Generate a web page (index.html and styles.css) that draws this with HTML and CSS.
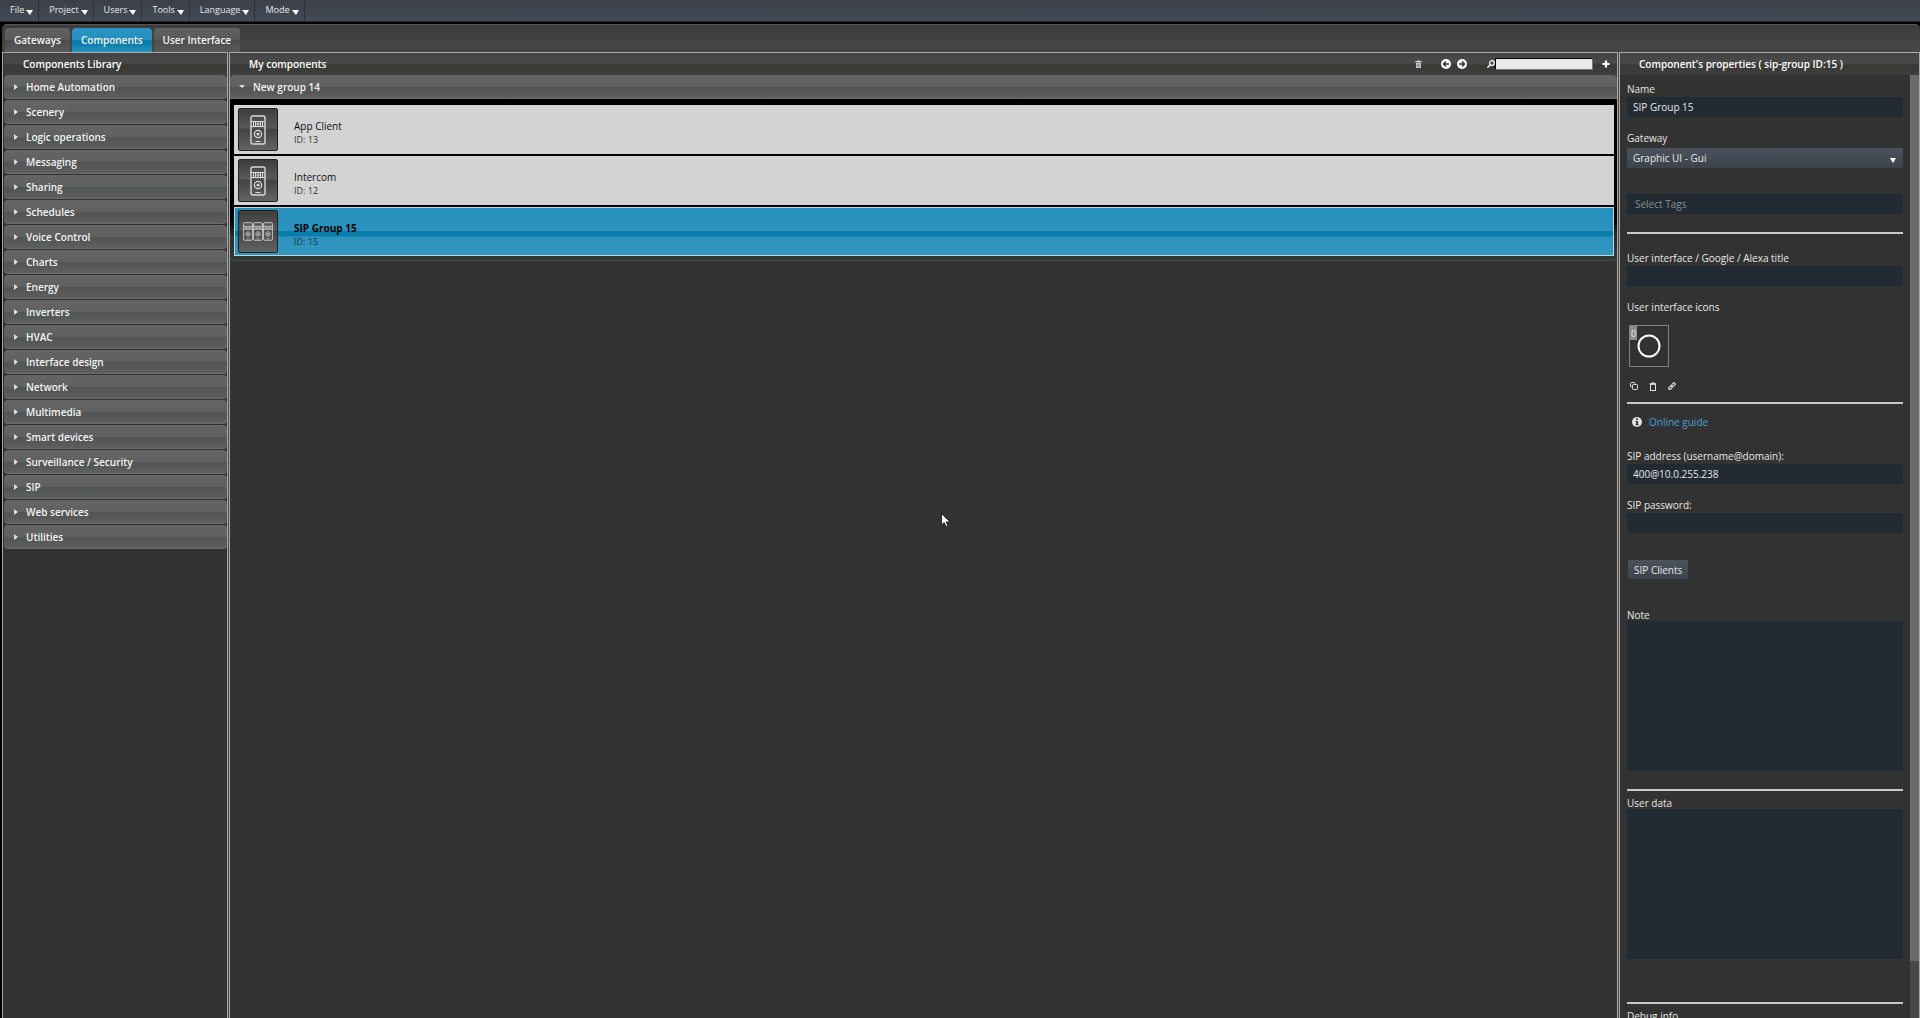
FILE: index.html
```html
<!DOCTYPE html>
<html lang="en">
<head>
<meta charset="utf-8">
<title>Configurator</title>
<link rel="stylesheet" href="styles.css">
</head>
<body>
<svg class="defs" aria-hidden="true">
  <symbol id="intercom" viewBox="0 0 16 30">
    <g fill="none" stroke="#d8d8d8">
      <rect x="1" y="1" width="14" height="28" rx="1.5" stroke-width="1.4"/>
      <path d="M1 6.500H15M1 11.500H15M3.500 6.500V11.500M5.500 6.500V11.500M10.500 6.500V11.500M12.500 6.500V11.500" />
      <circle cx="8" cy="9" r="1.200"/>
      <circle cx="8" cy="19" r="3.600" stroke-width="1.300"/>
      <path d="M5.500 26.500H10.500"/>
    </g>
    <circle cx="8" cy="19" r="1.500" fill="#d8d8d8"/>
  </symbol>
</svg>

<nav class="menubar">
  <button class="menu">File</button>
  <button class="menu">Project</button>
  <button class="menu">Users</button>
  <button class="menu">Tools</button>
  <button class="menu">Language</button>
  <button class="menu">Mode</button>
</nav>

<div class="workspace">
  <div class="tabs" role="tablist">
    <button class="tab" role="tab">Gateways</button>
    <button class="tab active" role="tab" aria-selected="true">Components</button>
    <button class="tab" role="tab">User Interface</button>
  </div>

  <div class="panels">
    <aside class="panel library">
      <h2 class="panel-title">Components Library</h2>
      <button class="fold">Home Automation</button>
      <button class="fold">Scenery</button>
      <button class="fold">Logic operations</button>
      <button class="fold">Messaging</button>
      <button class="fold">Sharing</button>
      <button class="fold">Schedules</button>
      <button class="fold">Voice Control</button>
      <button class="fold">Charts</button>
      <button class="fold">Energy</button>
      <button class="fold">Inverters</button>
      <button class="fold">HVAC</button>
      <button class="fold">Interface design</button>
      <button class="fold">Network</button>
      <button class="fold">Multimedia</button>
      <button class="fold">Smart devices</button>
      <button class="fold">Surveillance / Security</button>
      <button class="fold">SIP</button>
      <button class="fold">Web services</button>
      <button class="fold">Utilities</button>
    </aside>

    <main class="panel components">
      <header class="panel-title">
        <h2 class="title-text">My components</h2>
        <div class="tools">
          <button class="tool delete" aria-label="Delete">
            <svg width="7" height="8" viewBox="0 0 8 10"><path d="M0 1.500H2.500V.5H5.500V1.500H8V2.800H0Z" fill="#ddd"/><path d="M1 3.500H7V10H1Z" fill="#ddd"/><path d="M2.500 4.500V9M4 4.500V9M5.500 4.500V9" stroke="#555" stroke-width=".7"/></svg>
          </button>
          <button class="tool" aria-label="Previous">
            <svg width="10" height="10" viewBox="0 0 10 10"><circle cx="5" cy="5" r="5" fill="#fff"/><path d="M8 5H3M5 2.500L2.500 5L5 7.500" fill="none" stroke="#333" stroke-width="1.500"/></svg>
          </button>
          <button class="tool next" aria-label="Next">
            <svg width="10" height="10" viewBox="0 0 10 10"><circle cx="5" cy="5" r="5" fill="#fff"/><path d="M2 5H7M5 2.500L7.500 5L5 7.500" fill="none" stroke="#333" stroke-width="1.500"/></svg>
          </button>
          <label class="search">
            <svg width="8" height="8" viewBox="0 0 8 8"><circle cx="5" cy="3" r="2.300" fill="none" stroke="#fff" stroke-width="1.200"/><path d="M3.300 4.700L.4 7.600" stroke="#fff" stroke-width="1.500"/></svg>
            <input class="search-box" type="text" aria-label="Search">
          </label>
          <button class="tool" aria-label="Add">
            <svg width="8" height="8" viewBox="0 0 8 8"><path d="M4 .5V7.500M.5 4H7.500" stroke="#fff" stroke-width="2.200"/></svg>
          </button>
        </div>
      </header>
      <button class="fold open">New group 14</button>
      <ul class="items">
        <li class="item">
          <span class="thumb"><svg width="16" height="30"><use href="#intercom"/></svg></span>
          <span class="item-text"><span class="item-name">App Client</span><span class="item-id">ID: 13</span></span>
        </li>
        <li class="item">
          <span class="thumb"><svg width="16" height="30"><use href="#intercom"/></svg></span>
          <span class="item-text"><span class="item-name">Intercom</span><span class="item-id">ID: 12</span></span>
        </li>
        <li class="item selected">
          <span class="thumb trio"><svg width="10" height="19"><use href="#intercom"/></svg><svg width="10" height="19"><use href="#intercom"/></svg><svg width="10" height="19"><use href="#intercom"/></svg></span>
          <span class="item-text"><span class="item-name">SIP Group 15</span><span class="item-id">ID: 15</span></span>
        </li>
      </ul>
    </main>

    <aside class="panel properties">
      <h2 class="panel-title">Component's properties ( sip-group ID:15 )</h2>
      <div class="scroller">
        <form class="form">
          <label class="label" for="name">Name</label>
          <input class="field" id="name" type="text" value="SIP Group 15">
          <label class="label" for="gateway">Gateway</label>
          <span class="select-wrap"><select class="select" id="gateway"><option>Graphic UI - Gui</option></select></span>
          <input class="field tags" type="text" placeholder="Select Tags" aria-label="Select Tags">
          <hr class="rule">
          <label class="label" for="title">User interface / Google / Alexa title</label>
          <input class="field" id="title" type="text">
          <span class="label">User interface icons</span>
          <button type="button" class="icon-slot" aria-label="Icon 0">
            <span class="slot-number">0</span>
            <svg width="24" height="24" viewBox="0 0 24 24"><circle cx="12" cy="12" r="10.500" fill="none" stroke="#fff" stroke-width="2"/></svg>
          </button>
          <div class="icon-actions">
            <button type="button" class="tool" aria-label="Copy"><svg width="8" height="8" viewBox="0 0 8 8"><g fill="none" stroke="#ddd"><rect x="2.500" y="2.500" width="5" height="5" rx=".8"/><path d="M2.500 5H1.200L.5 4.300V1.200L1.200.5H4.300L5 1.200V2.500"/></g></svg></button>
            <button type="button" class="tool" aria-label="Paste"><svg width="8" height="9" viewBox="0 0 8 9"><rect x="1.500" y="2" width="5" height="6.500" fill="none" stroke="#ddd"/><path d="M.8 2H7.200M2.800 .8H5.200" stroke="#ddd" stroke-width="1.300"/></svg></button>
            <button type="button" class="tool" aria-label="Link"><svg width="8" height="8" viewBox="0 0 8 8"><g fill="none" stroke="#ddd" stroke-width="1.200"><rect x="-1.900" y="-1.200" width="3.800" height="2.400" rx="1.200" transform="translate(2.300 5.700) rotate(-45)"/><rect x="-1.900" y="-1.200" width="3.800" height="2.400" rx="1.200" transform="translate(5.500 2.500) rotate(-45)"/></g></svg></button>
          </div>
          <hr class="rule">
          <div class="guide">
            <svg width="10" height="10" viewBox="0 0 10 10"><circle cx="5" cy="5" r="5" fill="#e4e4e4"/><path d="M4 1.500H6V3H4ZM3.500 4H6V7.200H6.700V8.300H3.500V7.200H4.200V5H3.500Z" fill="#333"/></svg>
            <a class="guide-link" href="#">Online guide</a>
          </div>
          <label class="label" for="sip">SIP address (username@domain):</label>
          <input class="field" id="sip" type="text" value="400@10.0.255.238">
          <label class="label" for="pwd">SIP password:</label>
          <input class="field" id="pwd" type="password">
          <button type="button" class="clients">SIP Clients</button>
          <label class="label tight" for="note">Note</label>
          <textarea class="field area" id="note"></textarea>
          <hr class="rule">
          <label class="label tight data" for="data">User data</label>
          <textarea class="field area" id="data"></textarea>
          <hr class="rule last">
          <span class="label tight data">Debug info</span>
        </form>
        <div class="scrollbar"><div class="scroll-thumb"></div></div>
      </div>
    </aside>
  </div>
</div>

<svg class="pointer" width="10" height="15" viewBox="0 0 10 15" aria-hidden="true"><path d="M.5 .8V12L3.200 9.500L5 13.800L7 13L5.200 8.900H9.200Z" fill="#fff" stroke="#111" stroke-width=".8"/></svg>
</body>
</html>
```
FILE: styles.css
```css
*, *::before, *::after { box-sizing: border-box; }

body {
  margin: 0;
  height: 100vh;
  display: flex;
  flex-direction: column;
  overflow: hidden;
  background: #000;
  color: #e8e8e8;
  font: 10px/16px "Open Sans", "Noto Sans", sans-serif;
}

button, input, select, textarea { font: inherit; color: inherit; border: 0; margin: 0; padding: 0; }
button { background: none; text-align: left; white-space: nowrap; }
h2 { margin: 0; font: inherit; }
svg { display: block; flex: none; }
.defs { position: absolute; width: 0; height: 0; }

/* Menu bar */
.menubar {
  flex: none;
  display: flex;
  height: 22px;
  background: linear-gradient(#3a3f48, #454b55);
  border-bottom: 1px solid #23272d;
}
.menu {
  display: flex;
  align-items: center;
  gap: 2px;
  padding: 0 5px 1px 10px;
  border-right: 1px solid #2c3037;
  font-size: 9px;
}
.menu::after {
  content: "";
  margin-top: 4px;
  border: 4px solid transparent;
  border-top: 5px solid #fff;
  border-bottom: 0;
  border-right-width: 3px;
}

/* Workspace and tabs */
.workspace {
  flex: 1;
  min-height: 0;
  display: flex;
  flex-direction: column;
  margin: 2px 0 0 2px;
  background: linear-gradient(#3c3c3c, #474745 28px);
  border-top: 1px solid #555;
  border-radius: 5px 5px 0 0;
}
.tabs { flex: none; display: flex; gap: 2px; padding: 3px 3px 0; height: 27px; }
.tab {
  padding: 0 9px;
  border-radius: 4px 4px 0 0;
  background: linear-gradient(#636363, #585858 50%, #4b4d4d 52%, #5a5a5a);
  color: #f4f4f4;
  font-weight: 600;
}
.tab.active { background: linear-gradient(#2a95c2, #2590bd 48%, #0b7cab 52%, #0b7cab 66%, #2a93bf); }

/* Panels */
.panels { flex: 1; min-height: 0; display: grid; grid-template-columns: 226px minmax(0, 1fr) 301px; gap: 1px; }
.panel {
  min-width: 0;
  min-height: 0;
  overflow: hidden;
  display: flex;
  flex-direction: column;
  border: 1px solid #a9a9a9;
  border-bottom: 0;
  background: #323232;
}
.library { padding-left: 1px; }
.panel-title {
  flex: none;
  display: flex;
  align-items: center;
  height: 22px;
  padding: 0 7px 0 19px;
  background: linear-gradient(#434443, #4a4b49 45%, #393a38 55%, #3e3e3c);
  color: #fff;
  font-weight: 600;
}
.title-text { flex: 1; }

.fold {
  flex: none;
  display: flex;
  align-items: center;
  gap: 8px;
  height: 24px;
  margin: 0 0 1px;
  padding: 0 0 0 10px;
  border-radius: 4px;
  border-bottom: 1px solid #6b6b6b;
  background: linear-gradient(#656565, #606060 50%, #505453 55%, #5f5f5f);
  color: #f4f4f4;
  font-weight: 600;
}
.fold::before {
  content: "";
  border: 3px solid transparent;
  border-left: 4px solid #ddd;
  border-right: 0;
}
.fold.open { margin: 0; border-radius: 4px 4px 0 0; padding-left: 9px; }
.fold.open::before { border: 3px solid transparent; border-top: 3px solid #ddd; border-bottom: 0; }

/* Component list */
.tools { display: flex; align-items: center; }
.tool { display: block; }
.delete { margin-right: 19px; }
.next { margin: 0 20px 0 6px; }
.search { display: flex; align-items: center; margin-right: 9px; }
.search-box {
  width: 98px;
  height: 12px;
  border: 1px solid #777;
  border-top: 1px solid #000;
  border-left: 1px solid #000;
  background: #e8e8e8;
  color: #222;
}
.items {
  list-style: none;
  display: flex;
  flex-direction: column;
  gap: 2px;
  margin: 0;
  padding: 6px 3px 4px 4px;
  background: linear-gradient(#000 75%, #2b2d2d 85%, #333636);
  border-bottom: 1px solid #4b4d4d;
  border-radius: 0 0 5px 5px;
}
.item {
  display: flex;
  align-items: center;
  gap: 16px;
  height: 49px;
  padding: 0 4px;
  background: #d2d3d2;
  color: #111;
}
.item.selected {
  background: linear-gradient(#2590bd, #2b93bd 48%, #087cab 50%, #087cab 59%, #2e93bd 61%, #3397c0);
  outline: 1px solid #b9d5e0;
  outline-offset: -1px;
}
.thumb {
  display: flex;
  align-items: center;
  justify-content: center;
  width: 40px;
  height: 43px;
  border: 1px solid #222;
  border-radius: 2px;
  background: linear-gradient(#3c3d3d, #585959 46%, #434545 50%, #626363);
}
.item-text { display: flex; flex-direction: column; line-height: 13px; padding-top: 6px; }
.item-id { font-size: 9px; color: #333; }
.selected .item-name { font-weight: 700; color: #000; }
.selected .item-id { color: #14364a; }

/* Properties */
.scroller { flex: 1; min-height: 0; display: flex; background: #323232; }
.form { flex: 1; min-width: 0; display: flex; flex-direction: column; padding: 6px 7px 0 7px; overflow: hidden; }
.form > * { flex: none; }
.label { height: 16px; }
.tight { height: 14px; }
.field {
  width: 100%;
  height: 20px;
  margin-bottom: 13px;
  padding: 0 6px;
  border-radius: 2px;
  background: #222a32;
  resize: none;
}
.tags { margin: 26px 0 18px; padding: 0 8px; }
.tags::placeholder { color: #8a8d90; opacity: 1; }
.select-wrap { display: block; position: relative; margin-top: 2px; }
.select-wrap::after {
  content: "";
  position: absolute;
  right: 7px;
  top: 10px;
  border: 3px solid transparent;
  border-top: 5px solid #fff;
  border-bottom: 0;
}
.select {
  appearance: none;
  display: block;
  width: 100%;
  height: 20px;
  padding: 0 6px;
  background: linear-gradient(#4b525d, #3d434c);
}
.rule { width: 100%; height: 2px; margin: 0 0 16px; border: 0; background: #c9c9c9; }
.icon-slot {
  position: relative;
  display: flex;
  align-items: center;
  justify-content: center;
  width: 40px;
  height: 42px;
  margin: 10px 2px 14px;
  border: 1px solid #808080;
}
.slot-number { position: absolute; left: 0; top: 0; width: 7px; height: 14px; background: #8b8d8b; font-size: 9px; line-height: 15px; text-align: center; }
.icon-actions { display: flex; align-items: center; gap: 11px; height: 10px; margin: 0 3px 11px; }
.guide { display: flex; align-items: center; gap: 7px; height: 16px; margin: -6px 5px 18px; }
.guide-link { color: #4a9fd6; text-decoration: none; }
.clients {
  align-self: flex-start;
  height: 19px;
  margin: 14px 1px 28px;
  padding: 0 6px;
  background: linear-gradient(#4b525d, #3d434c);
}
.area { display: block; height: 150px; margin-bottom: 18px; }
.data { margin-top: -12px; }
.last { margin-top: 25px; }
.scrollbar { flex: none; width: 9px; background: #484848; }
.scroll-thumb { height: 94%; background: #6b6b6b; }

.pointer { position: absolute; left: 49%; top: 513px; }
```
